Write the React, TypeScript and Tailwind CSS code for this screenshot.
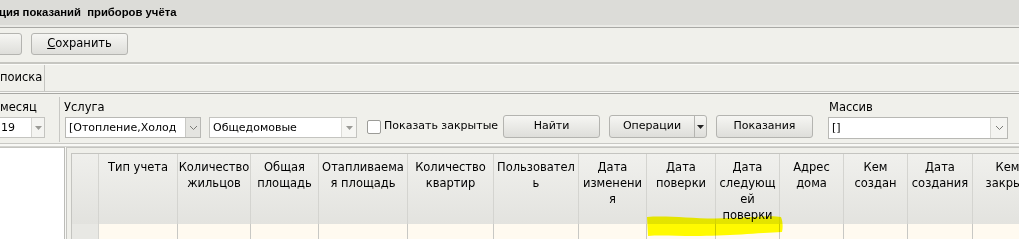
import React from "react";

const font = { fontFamily: '"DejaVu Sans", Verdana, sans-serif' };

const columns: { w: number; lines: string[] }[] = [
  { w: 79, lines: ["Тип учета"] },
  { w: 73, lines: ["Количество", "жильцов"] },
  { w: 68, lines: ["Общая", "площадь"] },
  { w: 89, lines: ["Отапливаема", "я площадь"] },
  { w: 86, lines: ["Количество", "квартир"] },
  { w: 85, lines: ["Пользовател", "ь"] },
  { w: 68, lines: ["Дата", "изменени", "я"] },
  { w: 69, lines: ["Дата", "поверки"] },
  { w: 64, lines: ["Дата", "следующ", "ей", "поверки"] },
  { w: 64, lines: ["Адрес", "дома"] },
  { w: 64, lines: ["Кем", "создан"] },
  { w: 65, lines: ["Дата", "создания"] },
  { w: 70, lines: ["Кем", "закрыл"] },
];

function Button({ children, className = "" }: { children: React.ReactNode; className?: string }) {
  return (
    <div className={`flex shrink-0 items-center justify-center rounded-[3px] border border-[#b4b4b0] bg-gradient-to-b from-[#f6f6f3] to-[#dedeDA] text-black ${className}`}>
      {children}
    </div>
  );
}

function Chevron() {
  return (
    <svg width="9" height="6" viewBox="0 0 9 6">
      <path d="M1 1 L4.5 4.5 L8 1" fill="none" stroke="#7a7a76" strokeWidth="1" />
    </svg>
  );
}

function Tri({ color = "#9a9a96" }: { color?: string }) {
  return (
    <svg width="7" height="4" viewBox="0 0 7 4">
      <path d="M0 0 H7 L3.5 4 Z" fill={color} />
    </svg>
  );
}

export default function App() {
  return (
    <div className="relative h-[239px] w-[1019px] overflow-hidden bg-[#efefea] text-[11px] text-black" style={font}>
      {/* title */}
      <div className="flex h-[25px] items-center bg-[#dcdcd8] font-bold text-[11.3px] leading-none" style={{ fontFamily: '"Liberation Sans", Arial, sans-serif' }}>
        <span className="-ml-px whitespace-pre">ция показаний  приборов учёта</span>
      </div>
      <div className="h-[2px] bg-[#eaeae6]" />
      <div className="h-px bg-[#a9a9a5]" />

      {/* toolbar */}
      <div className="flex h-[34px] items-start bg-[#f0f0eb] pt-[5px]">
        <Button className="-ml-[12px] h-[22px] w-[34px]">{""}</Button>
        <Button className="ml-[9px] h-[22px] w-[97px] text-[11.5px]">
          <span>
            <span className="underline">С</span>охранить
          </span>
        </Button>
      </div>
      <div className="h-[2px] bg-[#c6c6c1]" />
      <div className="h-px bg-[#fbfbf8]" />

      {/* tabs */}
      <div className="flex h-[26px] bg-[#f0f0eb]">
        <div className="flex w-[45px] items-center border-r border-[#c4c4c0] text-[11.5px]">
          <span>поиска</span>
        </div>
      </div>
      <div className="h-px bg-[#c8c8c4]" />
      <div className="h-px bg-[#f8f8f5]" />
      <div className="h-px bg-[#a8a8a4]" />

      {/* filters */}
      <div className="flex h-[49px] items-start bg-[#f0f0eb] text-[11px]">
        <div className="flex w-[46px] shrink-0 flex-col">
          <div className="mt-[4px] h-[18px] text-[11.5px] leading-[18px]">месяц</div>
          <div className="-ml-[2px] mt-px flex h-[21px] w-[47px] border border-[#c4c4c0] bg-white">
            <span className="flex-1 pl-[2px] leading-[19px]">19</span>
            <div className="flex w-[13px] items-center justify-center border-l border-[#d4d4d0] bg-[#f4f4f1]">
              <Tri />
            </div>
          </div>
        </div>
        <div className="ml-[13px] mt-[3px] h-[45px] w-px shrink-0 bg-[#c8c8c4]" />
        <div className="ml-[4px] flex w-[137px] shrink-0 flex-col">
          <div className="mt-[4px] h-[18px] text-[11.5px] leading-[18px]">Услуга</div>
          <div className="ml-px mt-px flex h-[21px] w-[136px] border border-[#b8b8b4] bg-white">
            <span className="flex-1 overflow-hidden whitespace-nowrap pl-[3px] leading-[19px]">[Отопление,Холод</span>
            <div className="flex w-[15px] shrink-0 items-center justify-center border-l border-[#c8c8c4] bg-[#e4e4e0]">
              <Chevron />
            </div>
          </div>
        </div>
        <div className="ml-[8px] mt-[23px] flex h-[21px] w-[148px] shrink-0 border border-[#c4c4c0] bg-white">
          <span className="flex-1 pl-[3px] leading-[19px]">Общедомовые</span>
          <div className="flex w-[15px] items-center justify-center border-l border-[#dcdcd8] bg-[#f6f6f3]">
            <Tri />
          </div>
        </div>
        <div className="ml-[10px] mt-[22px] flex h-[21px] w-[136px] shrink-0 items-center whitespace-nowrap">
          <div className="h-[14px] w-[14px] shrink-0 rounded-[2px] border border-[#9c9c98] bg-white" />
          <span className="ml-[3px]">Показать закрытые</span>
        </div>
        <Button className="mt-[21px] h-[23px] w-[97px]">Найти</Button>
        <div className="ml-[9px] mt-[21px] flex h-[23px] w-[98px] shrink-0 rounded-[3px] border border-[#b4b4b0] bg-gradient-to-b from-[#f6f6f3] to-[#dedeDA]">
          <span className="flex flex-1 items-center justify-center">Операции</span>
          <div className="flex w-[12px] items-center justify-center border-l border-[#b4b4b0]">
            <Tri color="#222" />
          </div>
        </div>
        <Button className="ml-[9px] mt-[21px] h-[23px] w-[97px]">Показания</Button>
        <div className="ml-[15px] flex shrink-0 flex-col">
          <div className="mt-[4px] h-[18px] pl-px text-[11.5px] leading-[18px]">Массив</div>
          <div className="mt-px flex h-[22px] w-[180px] border border-[#b8b8b4] bg-white">
            <span className="flex-1 pl-[3px] leading-[20px]">[]</span>
            <div className="flex w-[17px] items-center justify-center border-l border-[#d8d8d4] bg-[#f4f4f1]">
              <Chevron />
            </div>
          </div>
        </div>
      </div>
      <div className="h-px bg-[#c8c8c4]" />
      <div className="h-[2px] bg-[#f8f8f5]" />
      <div className="h-px bg-[#d4d4d0]" />

      {/* table area */}
      <div className="flex h-[92px]">
        <div className="w-[64px] shrink-0 border-t border-[#c4c4c0] bg-white" />
        <div className="w-px shrink-0 bg-[#bcbcb8]" />
        <div className="w-px shrink-0 bg-[#f8f8f5]" />
        <div className="flex min-w-0 flex-1 flex-col overflow-hidden border-l border-t border-[#c4c4c0] bg-[#efefea] pl-[4px] pt-[5px]">
          <div className="flex flex-1 flex-col border-l border-t border-[#c4c4c0]">
            <div className="flex h-[70px]">
              <div className="w-[27px] shrink-0 border-r border-[#d4d4d0] bg-gradient-to-b from-[#efefec] to-[#e2e2de]" />
              {columns.map((c, i) => (
                <div
                  key={i}
                  className="shrink-0 border-r border-[#d4d4d0] bg-gradient-to-b from-[#f0f0ed] to-[#e3e3df] pt-[5px] text-center text-[11.5px] leading-[16px]"
                  style={{ width: c.w }}
                >
                  {c.lines.map((l, j) => (
                    <div key={j} className="whitespace-nowrap">
                      {l}
                    </div>
                  ))}
                </div>
              ))}
            </div>
            <div className="flex flex-1">
              <div className="w-[27px] shrink-0 border-r border-[#d4d4d0] bg-[#e8e8e4]" />
              {columns.map((c, i) => (
                <div key={i} className="shrink-0 border-r border-[#c8c8c4] bg-[#fffaf0]" style={{ width: c.w }} />
              ))}
            </div>
          </div>
        </div>
      </div>

      {/* yellow marker annotation */}
      <svg className="pointer-events-none absolute left-0 top-0 mix-blend-multiply" width="1019" height="239">
        <path
          d="M647 217 C670 215 700 220 730 218 C755 217 772 215 781 217 C783 222 783 228 782 232 C760 233 725 236 695 236 C675 236 660 235 648 236 Z"
          fill="#ffff00"
        />
      </svg>
    </div>
  );
}
